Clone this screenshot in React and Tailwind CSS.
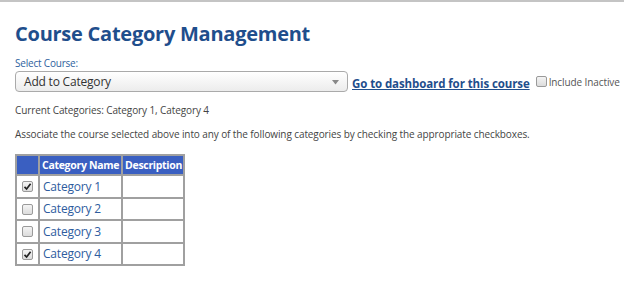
const categories = [
  { name: "Category 1", checked: true },
  { name: "Category 2", checked: false },
  { name: "Category 3", checked: false },
  { name: "Category 4", checked: true },
];

const Check = ({ checked }) => (
  <span className="inline-flex w-[11px] h-[11px] items-center justify-center rounded-[2px] border border-[#9a9a9a] bg-gradient-to-b from-[#f4f4f4] to-[#dcdcdc]">
    {checked && (
      <svg width="9" height="9" viewBox="0 0 9 9">
        <path d="M1.5 4.8 L3.6 7 L7.6 1.8" fill="none" stroke="#222" strokeWidth="1.7" />
      </svg>
    )}
  </span>
);

const App = () => {
  return (
    <div
      className="w-[624px] h-[306px] bg-white border-t-2 border-[#c4c4c4] overflow-hidden"
      style={{ fontFamily: '"Open Sans", "Liberation Sans", sans-serif' }}
    >
      <div className="px-[15px]">
        <h1 className="mt-[18px] text-[20px] leading-[28px] font-bold text-[#1f4e8c] tracking-[-0.25px] whitespace-nowrap">
          Course Category Management
        </h1>

        <div className="mt-[9px] text-[10px] leading-[12px] text-[#2f5f9e] tracking-[-0.2px]">
          Select Course:
        </div>
        <div className="mt-[2px] flex items-center whitespace-nowrap">
          <div className="relative shrink-0 w-[333px] h-[21px] rounded-[4px] border border-[#aaaaaa] bg-gradient-to-b from-white to-[#ececec] flex items-center pl-[8px] text-[12px] text-[#333] tracking-[-0.2px]">
            Add to Category
            <svg className="absolute right-[8px] top-[8px]" width="7" height="5" viewBox="0 0 7 5">
              <path d="M0 0 H7 L3.5 4.5 Z" fill="#888" />
            </svg>
          </div>
          <a className="ml-[4px] mt-[4px] text-[11.5px] font-bold text-[#1f4e8c] underline tracking-[-0.1px]">
            Go to dashboard for this course
          </a>
          <span className="ml-[6px] flex">
            <Check checked={false} />
          </span>
          <span className="ml-[2px] mt-[2px] text-[10px] text-[#555] tracking-[-0.1px]">Include Inactive</span>
        </div>

        <p className="mt-[11px] text-[10px] leading-[14px] text-[#444] tracking-[-0.1px]">
          Current Categories: Category 1, Category 4
        </p>
        <p className="mt-[10px] text-[10px] leading-[14px] text-[#444] tracking-[-0.1px] whitespace-nowrap">
          Associate the course selected above into any of the following categories by checking the appropriate checkboxes.
        </p>

        <table className="mt-[13px] border-collapse border-2 border-[#a0a0a0] text-left table-fixed w-[168px]">
          <thead>
            <tr className="bg-[#3a5fc1] text-white text-[10.5px] leading-[15px] font-bold">
              <th className="w-[23px] h-[20px] border-2 border-[#a0a0a0] p-0"></th>
              <th className="w-[83px] h-[20px] border-2 border-[#a0a0a0] px-[2px] py-0 font-bold tracking-[-0.3px] whitespace-nowrap">Category Name</th>
              <th className="w-[62px] h-[20px] border-2 border-[#a0a0a0] px-[2px] py-0 font-bold tracking-[-0.3px] whitespace-nowrap">Description</th>
            </tr>
          </thead>
          <tbody>
            {categories.map((c) => (
              <tr key={c.name}>
                <td className="h-[22.5px] border-2 border-[#a0a0a0] p-0 text-center leading-[0]">
                  <Check checked={c.checked} />
                </td>
                <td className="h-[22.5px] border-2 border-[#a0a0a0] px-[3px] py-0 text-[12px] leading-[16px] text-[#2e5c9e] tracking-[-0.2px]">
                  {c.name}
                </td>
                <td className="h-[22.5px] border-2 border-[#a0a0a0] p-0"></td>
              </tr>
            ))}
          </tbody>
        </table>
      </div>
    </div>
  );
};

export default App;
